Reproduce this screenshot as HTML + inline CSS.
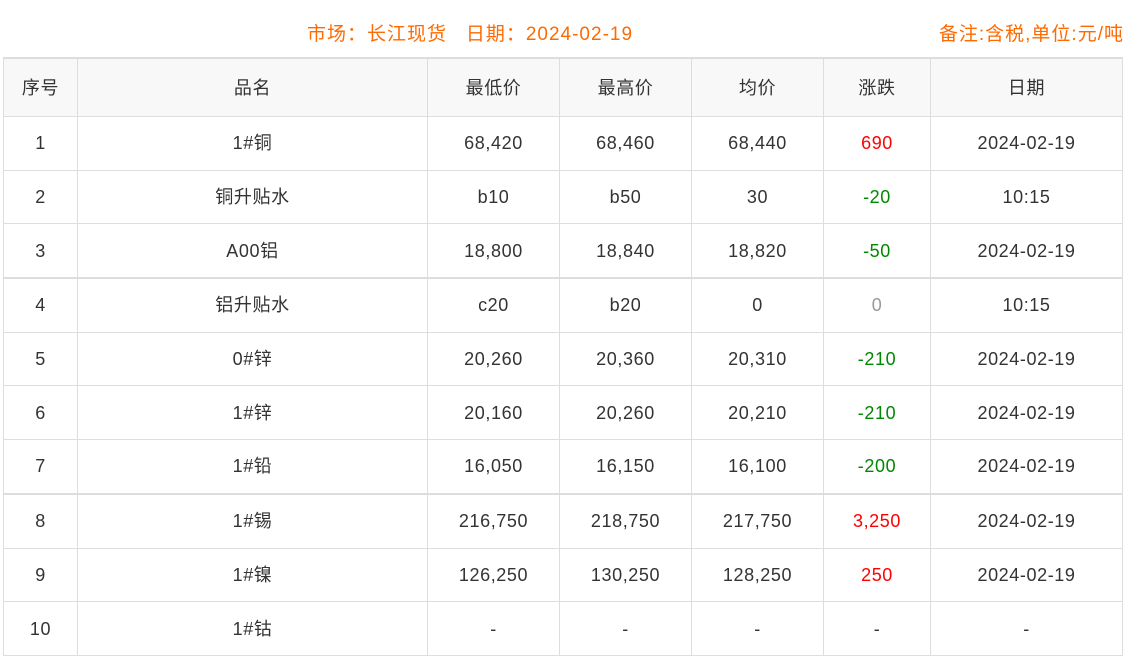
<!DOCTYPE html>
<html><head><meta charset="utf-8"><style>
body{margin:0;width:1127px;height:604px;overflow:hidden;background:#fff;font-family:"Liberation Sans","Noto Sans CJK SC",sans-serif;}
.t{position:absolute;color:#ff6a00;font-size:19px;top:23px;letter-spacing:1px;line-height:24px;}
table{position:absolute;left:3px;top:57px;border-collapse:collapse;width:1120px;font-size:18px;color:#333;letter-spacing:0.6px;}
td,th{border:1px solid #ddd;text-align:center;font-weight:normal;padding:0;line-height:20px;vertical-align:middle;}
th{background:#f8f8f8;height:57px;}
td{height:52.7px;}
tr.top th{border-top:2px solid #ddd;}
tr.b td{border-top:2px solid #ddd;}
.r{color:#f00}.g{color:#080}.z{color:#999}
</style></head><body>
<div class="t" style="left:307px">市场：长江现货&nbsp;&nbsp;&nbsp;日期：2024-02-19</div>
<div class="t" style="right:3px">备注:含税,单位:元/吨</div>
<table>
<colgroup><col style="width:74px"><col style="width:350px"><col style="width:132px"><col style="width:132px"><col style="width:132px"><col style="width:107px"><col></colgroup>
<tr class="top"><th>序号</th><th>品名</th><th>最低价</th><th>最高价</th><th>均价</th><th>涨跌</th><th>日期</th></tr>
<tr><td>1</td><td>1#铜</td><td>68,420</td><td>68,460</td><td>68,440</td><td class="r">690</td><td>2024-02-19</td></tr>
<tr><td>2</td><td>铜升贴水</td><td>b10</td><td>b50</td><td>30</td><td class="g">-20</td><td>10:15</td></tr>
<tr><td>3</td><td>A00铝</td><td>18,800</td><td>18,840</td><td>18,820</td><td class="g">-50</td><td>2024-02-19</td></tr>
<tr class="b"><td>4</td><td>铝升贴水</td><td>c20</td><td>b20</td><td>0</td><td class="z">0</td><td>10:15</td></tr>
<tr><td>5</td><td>0#锌</td><td>20,260</td><td>20,360</td><td>20,310</td><td class="g">-210</td><td>2024-02-19</td></tr>
<tr><td>6</td><td>1#锌</td><td>20,160</td><td>20,260</td><td>20,210</td><td class="g">-210</td><td>2024-02-19</td></tr>
<tr><td>7</td><td>1#铅</td><td>16,050</td><td>16,150</td><td>16,100</td><td class="g">-200</td><td>2024-02-19</td></tr>
<tr class="b"><td>8</td><td>1#锡</td><td>216,750</td><td>218,750</td><td>217,750</td><td class="r">3,250</td><td>2024-02-19</td></tr>
<tr><td>9</td><td>1#镍</td><td>126,250</td><td>130,250</td><td>128,250</td><td class="r">250</td><td>2024-02-19</td></tr>
<tr><td>10</td><td>1#钴</td><td>-</td><td>-</td><td>-</td><td>-</td><td>-</td></tr>
</table>
</body></html>
